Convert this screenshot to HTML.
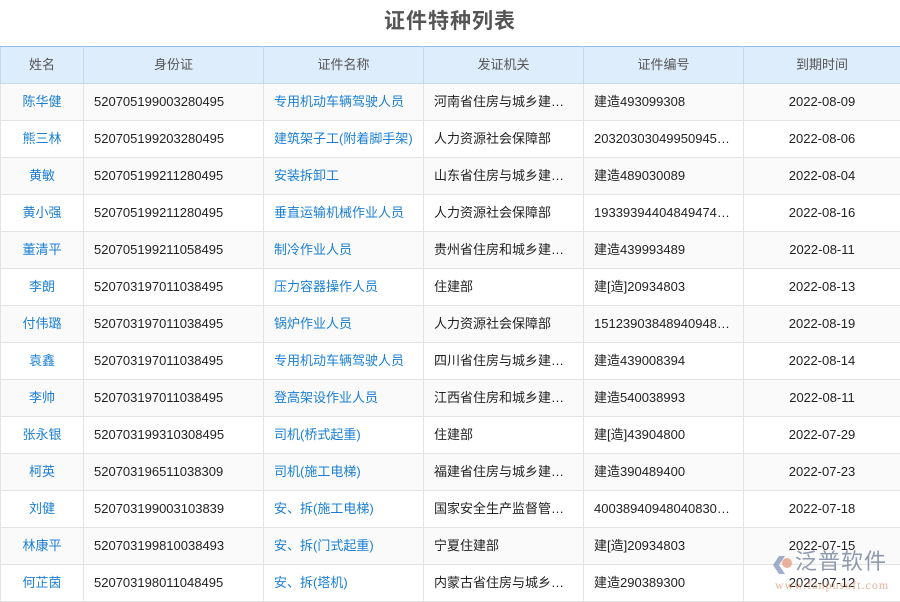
<!DOCTYPE html><html><head><meta charset="utf-8"><style>
body{margin:0;width:900px;height:600px;overflow:hidden;background:#fff;font-family:"Liberation Sans","Noto Sans CJK SC",sans-serif;}
h1{margin:0;position:absolute;top:8px;left:0;width:900px;text-align:center;font-size:21px;line-height:28px;color:#555;font-weight:bold;letter-spacing:1px}
table{position:absolute;top:46px;left:0;border-collapse:collapse;table-layout:fixed;width:900px}
td,th{border:1px solid #e3e3e3;height:36px;line-height:36px;padding:0 10px;font-size:13px;white-space:nowrap;overflow:hidden;color:#222;font-weight:normal}
th{background:#deedfb;color:#555;border-color:#c5d9ec;border-top:1px solid #8fbde8}
tr:nth-child(even) td{background:#fafafa}
td:first-child,td:nth-child(6),th{text-align:center}
td:first-child,td:nth-child(3){color:#1a7fd4}
.wm{position:absolute;left:795px;top:549px;color:#7d8aa3;font-size:22px;line-height:26px;opacity:.85;letter-spacing:1px}
.wm2{position:absolute;left:775px;top:578px;color:#e0a080;font-size:12px;opacity:.8;font-family:"Liberation Serif",serif;letter-spacing:1px}
.logo{position:absolute;left:771px;top:554px;opacity:.8}
</style></head><body>
<h1>证件特种列表</h1>
<table>
<colgroup><col style="width:83px"><col style="width:180px"><col style="width:160px"><col style="width:160px"><col style="width:160px"><col style="width:157px"></colgroup>
<tr><th>姓名</th><th>身份证</th><th>证件名称</th><th>发证机关</th><th>证件编号</th><th>到期时间</th></tr>
<tr><td>陈华健</td><td>520705199003280495</td><td>专用机动车辆驾驶人员</td><td>河南省住房与城乡建…</td><td>建造493099308</td><td>2022-08-09</td></tr>
<tr><td>熊三林</td><td>520705199203280495</td><td>建筑架子工(附着脚手架)</td><td>人力资源社会保障部</td><td>20320303049950945…</td><td>2022-08-06</td></tr>
<tr><td>黄敏</td><td>520705199211280495</td><td>安装拆卸工</td><td>山东省住房与城乡建…</td><td>建造489030089</td><td>2022-08-04</td></tr>
<tr><td>黄小强</td><td>520705199211280495</td><td>垂直运输机械作业人员</td><td>人力资源社会保障部</td><td>19339394404849474…</td><td>2022-08-16</td></tr>
<tr><td>董清平</td><td>520705199211058495</td><td>制冷作业人员</td><td>贵州省住房和城乡建…</td><td>建造439993489</td><td>2022-08-11</td></tr>
<tr><td>李朗</td><td>520703197011038495</td><td>压力容器操作人员</td><td>住建部</td><td>建[造]20934803</td><td>2022-08-13</td></tr>
<tr><td>付伟璐</td><td>520703197011038495</td><td>锅炉作业人员</td><td>人力资源社会保障部</td><td>15123903848940948…</td><td>2022-08-19</td></tr>
<tr><td>袁鑫</td><td>520703197011038495</td><td>专用机动车辆驾驶人员</td><td>四川省住房与城乡建…</td><td>建造439008394</td><td>2022-08-14</td></tr>
<tr><td>李帅</td><td>520703197011038495</td><td>登高架设作业人员</td><td>江西省住房和城乡建…</td><td>建造540038993</td><td>2022-08-11</td></tr>
<tr><td>张永银</td><td>520703199310308495</td><td>司机(桥式起重)</td><td>住建部</td><td>建[造]43904800</td><td>2022-07-29</td></tr>
<tr><td>柯英</td><td>520703196511038309</td><td>司机(施工电梯)</td><td>福建省住房与城乡建…</td><td>建造390489400</td><td>2022-07-23</td></tr>
<tr><td>刘健</td><td>520703199003103839</td><td>安、拆(施工电梯)</td><td>国家安全生产监督管…</td><td>40038940948040830…</td><td>2022-07-18</td></tr>
<tr><td>林康平</td><td>520703199810038493</td><td>安、拆(门式起重)</td><td>宁夏住建部</td><td>建[造]20934803</td><td>2022-07-15</td></tr>
<tr><td>何芷茵</td><td>520703198011048495</td><td>安、拆(塔机)</td><td>内蒙古省住房与城乡…</td><td>建造290389300</td><td>2022-07-12</td></tr>
</table>
<svg class="logo" width="22" height="22" viewBox="0 0 22 22"><path d="M2 11 L8 2 L14 2 L8 11 L14 20 L8 20 Z" fill="#8a9bbf"/><circle cx="16" cy="9" r="5" fill="#e8a080"/></svg>
<div class="wm">泛普软件</div>
<div class="wm2">www.fanpusoft.com</div>
</body></html>
